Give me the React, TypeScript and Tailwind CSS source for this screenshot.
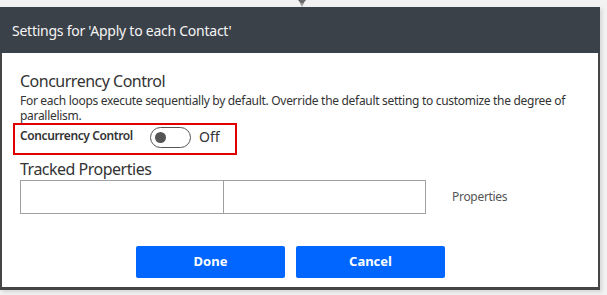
import React from "react";

export default function App() {
  const font = { fontFamily: '"Noto Sans", "Open Sans", sans-serif' };
  return (
    <div className="relative w-[607px] h-[295px] bg-[#f2f2f2] pt-[7px] overflow-hidden" style={font}>
      <svg className="absolute left-[295px] top-0" width="14" height="8" viewBox="0 0 14 8">
        <path d="M3 0 L11 0 L7 5 Z" fill="#6a6a6a" />
        <path d="M5 3 L9 3 L7 7 Z" fill="#9a9a9a" />
      </svg>
      <div className="w-[600px] h-[283px] flex flex-col bg-white shadow-[2px_2px_4px_rgba(0,0,0,0.12)]">
        <div className="h-[46px] bg-[#3b4149] flex items-center pl-[12px] text-[14px] tracking-[-0.25px] text-[#f4f4f4]">
          Settings for 'Apply to each Contact'
        </div>
        <div className="flex-1 border-l-2 border-r-2 border-b-[3px] border-[#454545] flex flex-col pl-[18px] pt-[17px]">
          <div className="text-[16px] leading-[22px] tracking-[-0.5px] text-[#333]">Concurrency Control</div>
          <div className="mt-[1px] text-[12px] leading-[15px] tracking-[-0.3px] text-[#333] w-[565px]">
            For each loops execute sequentially by default. Override the default setting to customize the degree of parallelism.
          </div>
          <div className="ml-[-7px] w-[224px] h-[32px] border-2 border-[#e00000] flex items-start pt-[2px] pl-[5px]">
            <div className="text-[12px] leading-[16px] font-semibold tracking-[-0.4px] text-[#333] w-[130px] mt-[1px]">Concurrency Control</div>
            <div className="w-[41px] h-[21px] rounded-full border border-[#555] flex items-center pl-[4px]">
              <div className="w-[11px] h-[11px] rounded-full bg-[#555]" />
            </div>
            <div className="ml-[8px] text-[14px] leading-[20px] text-[#333]">Off</div>
          </div>
          <div className="mt-[3px] text-[16px] leading-[22px] tracking-[-0.5px] text-[#333]">Tracked Properties</div>
          <div className="flex items-center mt-[0px]">
            <div className="flex w-[406px] h-[34px] border border-[#a0a0a0]">
              <div className="w-[203px] border-r border-[#a0a0a0]" />
              <div className="flex-1" />
            </div>
            <div className="ml-[26px] text-[12px] tracking-[-0.3px] text-[#555]">Properties</div>
          </div>
          <div className="flex gap-[11px] mt-[32px] ml-[116px]">
            <button className="w-[149px] h-[32px] rounded-[2px] bg-[#0066ff] text-white text-[13px] font-bold">Done</button>
            <button className="w-[149px] h-[32px] rounded-[2px] bg-[#0066ff] text-white text-[13px] font-bold">Cancel</button>
          </div>
        </div>
      </div>
    </div>
  );
}
